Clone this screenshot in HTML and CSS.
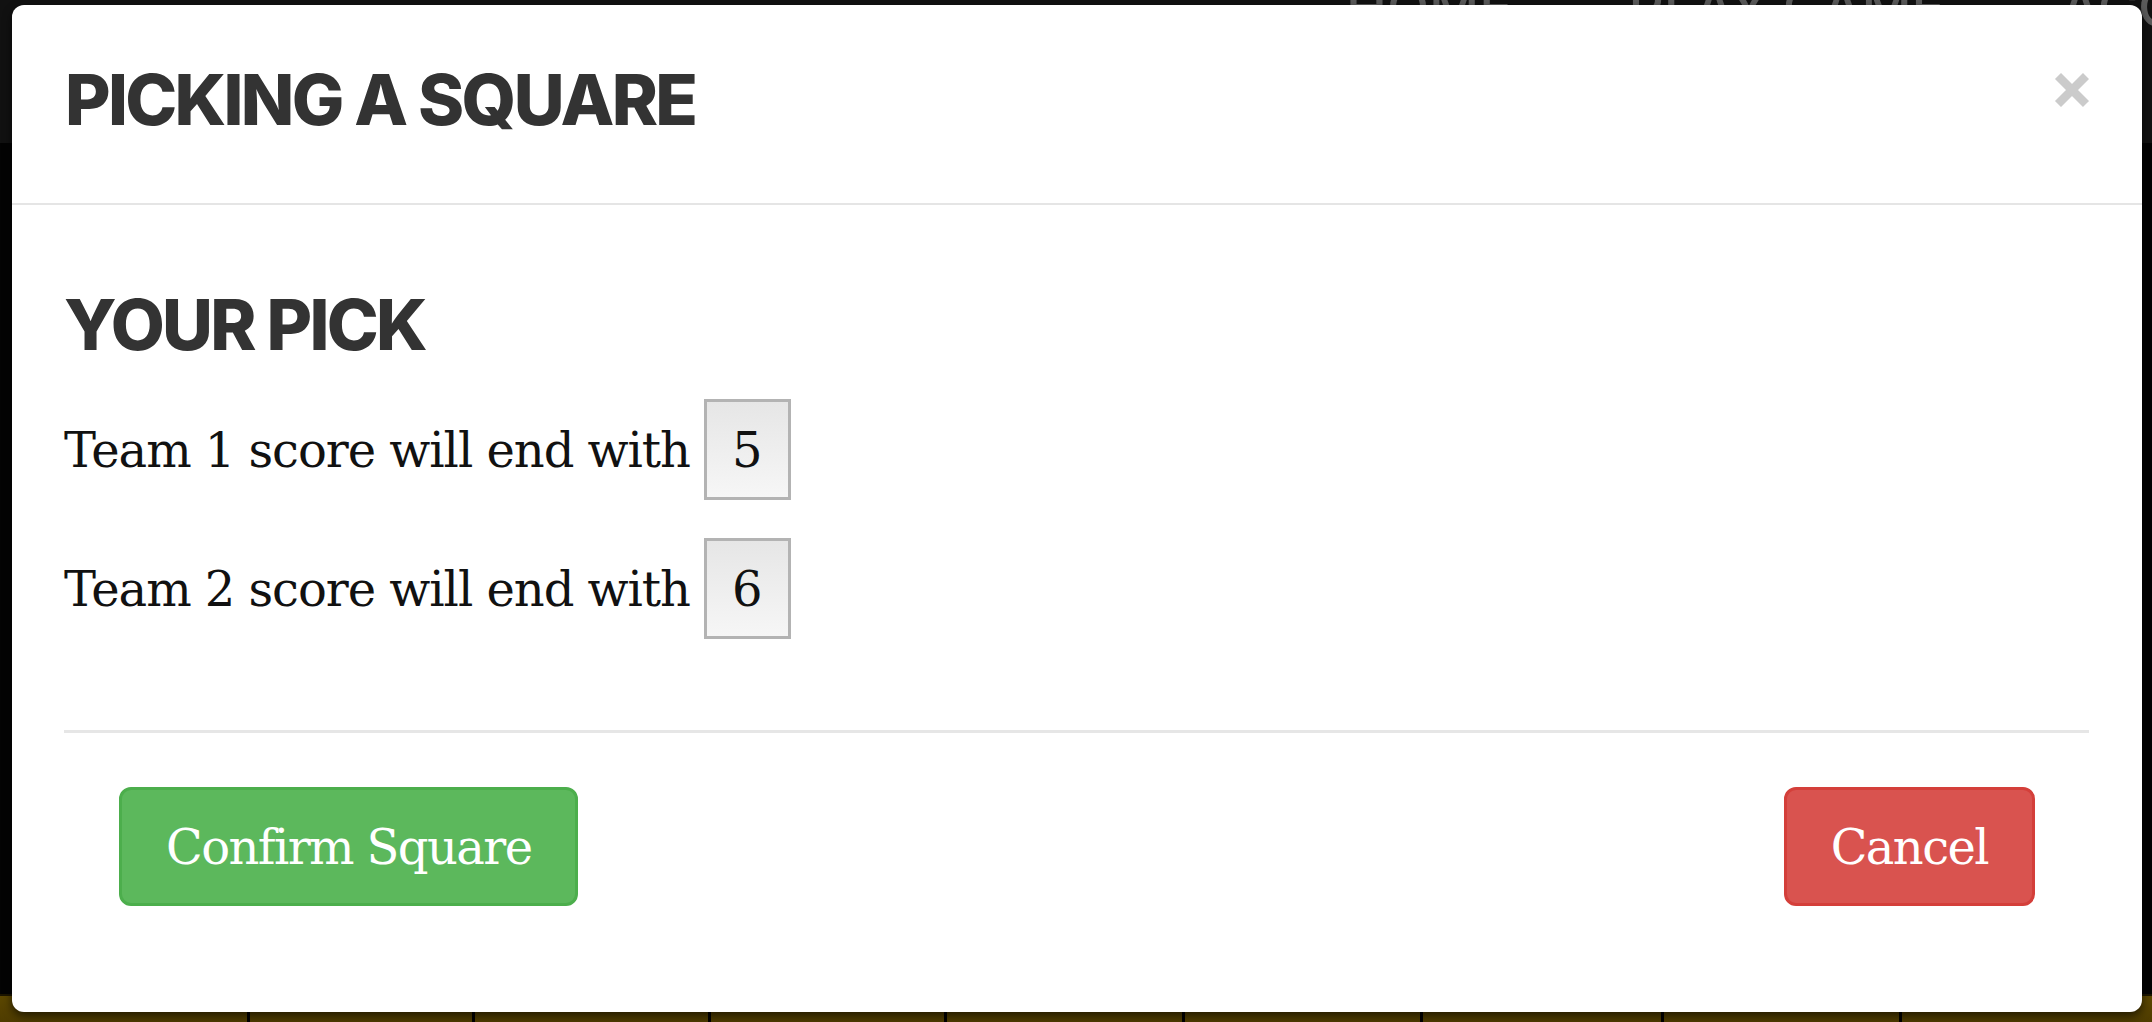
FILE: index.html
```html
<!DOCTYPE html>
<html lang="en">
<head>
<meta charset="utf-8">
<title>Picking a square</title>
<link rel="stylesheet" href="styles.css">
</head>
<body>
<div class="page">
  <nav class="topnav">
    <a class="nav-link">HOME</a>
    <a class="nav-link">PLAY GAME</a>
    <a class="nav-link">ACCOUNT</a>
  </nav>
  <div class="hero"></div>
  <div class="board">
    <div class="cell"></div><div class="cell"></div><div class="cell"></div>
    <div class="cell"></div><div class="cell"></div><div class="cell"></div>
    <div class="cell"></div><div class="cell"></div><div class="cell"></div>
  </div>
</div>

<div class="modal">
  <div class="modal-header">
    <h4 class="modal-title">PICKING A SQUARE</h4>
    <button class="close" aria-label="Close">
      <svg width="36" height="34" viewBox="0 0 36 34"><path d="M4 3 L32 31 M32 3 L4 31" stroke="#cbcbcb" stroke-width="8.5" fill="none"/></svg>
    </button>
  </div>
  <div class="modal-body">
    <h4 class="pick-title">YOUR PICK</h4>
    <div class="pick-row">
      <span class="pick-label">Team 1 score will end with</span>
      <span class="digit-box">5</span>
    </div>
    <div class="pick-row">
      <span class="pick-label">Team 2 score will end with</span>
      <span class="digit-box">6</span>
    </div>
    <hr class="divider">
  </div>
  <div class="modal-footer">
    <button class="btn btn-success">Confirm Square</button>
    <button class="btn btn-danger">Cancel</button>
  </div>
</div>
</body>
</html>
```

FILE: styles.css
```css
html, body {
  margin: 0;
  padding: 0;
}
body {
  width: 2152px;
  height: 1022px;
  overflow: hidden;
  background: #040404;
  position: relative;
  font-family: "DejaVu Serif", "Liberation Serif", serif;
}

.page {
  display: flex;
  flex-direction: column;
  height: 1022px;
}
.topnav {
  height: 143px;
  background: #111111;
  display: flex;
  align-items: flex-start;
  padding-left: 1346px;
  gap: 116px;
  overflow: hidden;
}
.nav-link {
  font-family: "Inter", "Open Sans", sans-serif;
  font-weight: 500;
  font-size: 55px;
  line-height: 55px;
  margin-top: -20px;
  color: #5a5a5a;
  white-space: nowrap;
}
.hero {
  flex: 1;
  background: #030303;
}
.board {
  height: 26px;
  display: grid;
  grid-template-columns: 247px 225px 236px 236px 238px 238px 241px 238px 1fr;
  background: #5a4500;
  border-top: 2px solid #1c1500;
}
.cell {
  background: linear-gradient(#5c4700, #4f3c00);
}
.cell + .cell {
  border-left: 3px solid #000;
}

/* modal */
.modal {
  position: absolute;
  left: 12px;
  top: 5px;
  width: 2130px;
  background: #ffffff;
  border-radius: 12px;
  box-shadow: 0 4px 10px rgba(0, 0, 0, 0.6);
}
.modal-header {
  display: flex;
  justify-content: space-between;
  align-items: flex-start;
  padding: 60px 52px 68px 53px;
  border-bottom: 2px solid #e5e5e5;
}
.modal-title,
.pick-title {
  margin: 0;
  font-family: "Inter", "Open Sans", sans-serif;
  font-weight: 800;
  font-size: 70px;
  line-height: 70px;
  color: #333333;
  letter-spacing: -2.7px;
}
.close {
  margin-top: 8px;
  padding: 0;
  border: 0;
  background: transparent;
  width: 36px;
  height: 34px;
  display: block;
}
.close svg {
  display: block;
}
.modal-body {
  padding: 85px 53px 0 52px;
}
.pick-title {
  margin-bottom: 39px;
}
.pick-row {
  display: flex;
  align-items: center;
  gap: 14px;
  margin-bottom: 38px;
}
.pick-label,
.digit-box {
  font-size: 48px;
  line-height: 60px;
  color: #111111;
}
.pick-label {
  letter-spacing: -1.05px;
}
.digit-box {
  box-sizing: border-box;
  height: 101px;
  padding: 0 25px;
  display: flex;
  align-items: center;
  justify-content: center;
  border: 3px solid #b3b3b3;
  background: linear-gradient(#e6e6e6, #f6f6f6);
}
.divider {
  margin: 91px 0 0 0;
  border: 0;
  border-top: 3px solid #e6e6e6;
  height: 0;
}
.modal-footer {
  display: flex;
  justify-content: space-between;
  padding: 54px 107px 106px 107px;
}
.btn {
  box-sizing: border-box;
  height: 119px;
  border: 3px solid;
  border-radius: 12px;
  padding: 0 44px;
  color: #ffffff;
  font-family: "DejaVu Serif", "Liberation Serif", serif;
  font-size: 48px;
  letter-spacing: -1.6px;
}
.btn-success {
  background: #5cb85c;
  border-color: #4cae4c;
}
.btn-danger {
  background: #d9534f;
  border-color: #d43f3a;
}
```
